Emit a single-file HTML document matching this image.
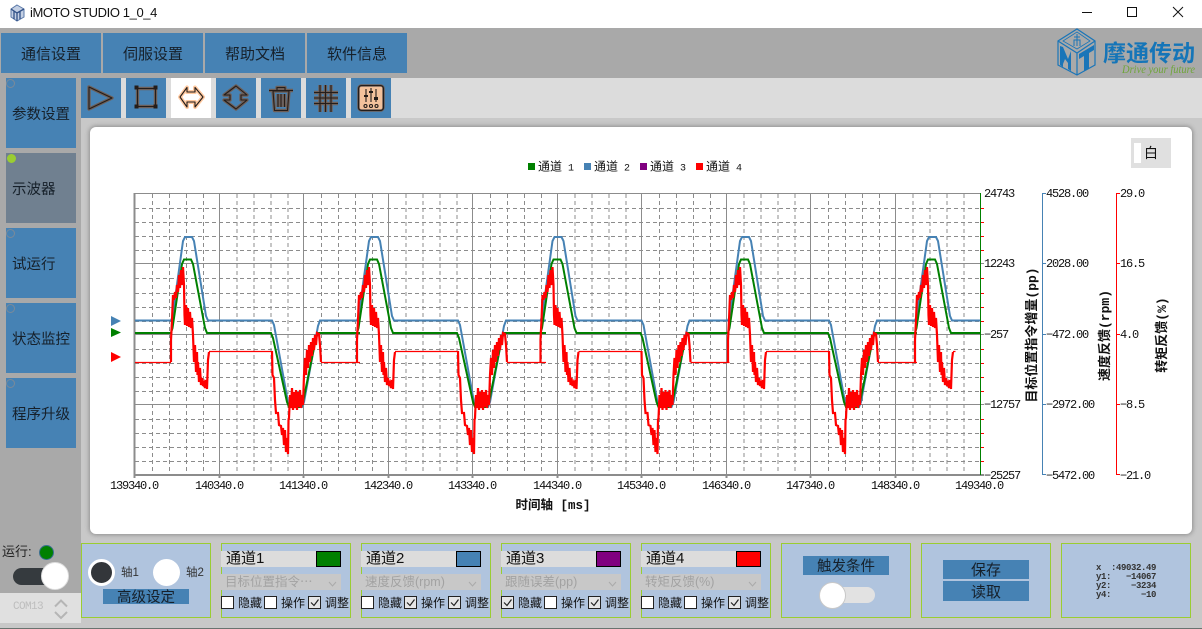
<!DOCTYPE html>
<html><head><meta charset="utf-8">
<style>
*{box-sizing:border-box;margin:0;padding:0}
html,body{width:1202px;height:629px;overflow:hidden;background:#c8c8c8;font-family:"Liberation Sans","Noto Sans CJK SC",sans-serif;color:#111}
.a{position:absolute}
.b{position:absolute;background:#4682b4;display:flex;align-items:center;justify-content:center;color:#16202a}
.m{top:33px;width:100px;height:40px;font-size:15px}
.s{left:6px;width:70px;height:70px;font-size:14.5px;justify-content:flex-start;padding-left:6px}
.d{position:absolute;left:6px;width:9px;height:9px;border-radius:50%;border:1px solid #7b8a99}
.t{top:78px;width:40px;height:40px}
.p{position:absolute;top:543px;width:130px;height:75px;background:#b0c4de;border:1px solid #9acd32}
.ct{position:absolute;left:0;top:8px;width:95px;height:16px;background:#dcdcdc;font-size:15px;line-height:16px;padding-left:5px}
.sw{position:absolute;left:95px;top:8px;width:25px;height:16px;border:1px solid #000}
.cb{position:absolute;left:0;top:30px;width:120px;height:16px;background:#c8c8c8;color:#a2a2a2;font-size:12.5px;line-height:16px;padding-left:4px;white-space:nowrap}
.cb svg{position:absolute;left:107px;top:7px}
.k{position:absolute;top:52px;width:13px;height:13px;background:#fff;border:1px solid #222}
.k.on{background:#e6e6e6}
.k.on svg{position:absolute;left:0;top:0}
.l{position:absolute;top:51px;font-size:12px;line-height:16px;white-space:nowrap;color:#111}
svg text{font-family:"Liberation Mono","Noto Sans CJK SC",monospace}
</style></head><body>

<!-- title bar -->
<div class="a" style="left:0;top:0;width:1202px;height:28px;background:#fff"></div>
<svg class="a" style="left:9px;top:4px" width="17" height="18" viewBox="0 0 17 18"><path d="M8 1 15 5V13L8 17 2 13V5Z" fill="#c4d0e4" stroke="#5a78a8" stroke-width="1"/><path d="M2 5 8 9 15 5M8 9V17M5 7V15M11 7V15" stroke="#2f4f86" stroke-width="1.3" fill="none"/></svg>
<div class="a" style="left:30px;top:4px;font-size:13px;letter-spacing:-.4px;line-height:18px;color:#111;white-space:nowrap">iMOTO STUDIO 1_0_4</div>
<svg class="a" style="left:1070px;top:0" width="132" height="28"><path d="M12 12.5H22" stroke="#111"/><rect x="57.5" y="7.5" width="9" height="9" fill="none" stroke="#111"/><path d="M103 7 113 17M113 7 103 17" stroke="#111"/></svg>

<!-- header -->
<div class="a" style="left:0;top:28px;width:1202px;height:50px;background:#a9a9a9"></div>
<div class="b m" style="left:1px">通信设置</div>
<div class="b m" style="left:103px">伺服设置</div>
<div class="b m" style="left:205px">帮助文档</div>
<div class="b m" style="left:307px">软件信息</div>

<svg class="a" style="left:1050px;top:26px" width="152" height="54" viewBox="0 0 152 54">
<g fill="none" stroke="#1a75b8" stroke-width="1.2">
<path d="M27 3 45 15V39L27 49 8 39V15Z"/><path d="M8 15 27 27 45 15M27 27V49"/>
<path d="M27 6 40 15 27 23 13 15Z" stroke-width=".8"/><path d="M24 11H30M27 8V20M24 20V14H30V20" stroke-width="1"/>
</g>
<path d="M10 20 13 21V41L10 39ZM13 21 18 33 21 25V45L18 43V37L15 33 13 38V41Z" fill="#1a75b8"/>
<path d="M29 28 44 19V24L39 27V42L34 45V30L29 33Z" fill="#1a75b8"/>
<text x="53" y="35" font-size="23" font-weight="700" fill="#1575b8" style="font-family:'Noto Sans CJK SC',sans-serif">摩通传动</text>
<text x="72" y="47" font-size="11.5" font-style="italic" fill="#6fa53a" textLength="73" lengthAdjust="spacingAndGlyphs" style="font-family:'Liberation Serif',serif">Drive your future</text>
</svg>

<!-- sidebar -->
<div class="a" style="left:0;top:78px;width:81px;height:515px;background:#a9a9a9"></div>
<div class="b s" style="top:78px">参数设置</div><div class="d" style="top:79px"></div>
<div class="b s" style="top:153px;background:#708090">示波器</div><div class="d" style="top:154px;left:7px;background:#9acd32;border-color:#9acd32"></div>
<div class="b s" style="top:228px">试运行</div><div class="d" style="top:229px"></div>
<div class="b s" style="top:303px">状态监控</div><div class="d" style="top:304px"></div>
<div class="b s" style="top:378px">程序升级</div><div class="d" style="top:379px"></div>

<div class="a" style="left:2px;top:543px;font-size:13px;line-height:18px;color:#222;white-space:nowrap">运行:</div>
<div class="a" style="left:39px;top:545px;width:15px;height:15px;border-radius:50%;background:#008000;border:1px solid #3a6f8f"></div>
<div class="a" style="left:13px;top:568px;width:42px;height:17px;border-radius:9px;background:#353a3e"></div>
<div class="a" style="left:41px;top:562px;width:28px;height:28px;border-radius:50%;background:#fff;border:1px solid #ddd"></div>
<div class="a" style="left:0;top:593px;width:81px;height:30px;background:#e0e0e0"></div>
<div class="a" style="left:13px;top:599px;font-size:11px;line-height:16px;color:#bdbdbd;font-family:'Liberation Mono',monospace;letter-spacing:-.6px">COM13</div>
<svg class="a" style="left:52px;top:596px" width="18" height="26"><path d="M3 10.500 9 4.500 15 10.500M3 16 9 22 15 16" fill="none" stroke="#b5b5b5" stroke-width="2"/></svg>

<!-- toolbar -->
<div class="a" style="left:81px;top:78px;width:1121px;height:40px;background:#dcdcdc"></div>
<div class="b t" style="left:81px"></div>
<div class="b t" style="left:126px"></div>
<div class="a t" style="left:171px;background:#fff"></div>
<div class="b t" style="left:216px"></div>
<div class="b t" style="left:261px"></div>
<div class="b t" style="left:306px"></div>
<div class="b t" style="left:351px"></div>
<svg class="a" style="left:0;top:0" width="400" height="120" fill="none" stroke-linejoin="round">
<g stroke="#6e5f58" stroke-width="3.4">
<path d="M89 87 112 98 89 109Z"/>
<path d="M137.500 88.500H155.500V106.500H137.500Z"/>
<path d="M236 86 247 95H241V100H247L236 109 224 100H230V95H224Z"/>
<path d="M269 90.500H293M277 90V87.500H285V90M273 91 274.500 110.500H287.500L289 91ZM278 94V107M281 94V107M284.500 94V107"/>
<path d="M320 85V112M325.500 85V112M331 85V112M314 92.500H338M314 98H338M314 103.500H338"/>
</g>
<path d="M180 97 187 87.500V92H195V87.500L203 97 195 107V102H187V107Z" stroke="#ffc9a0" stroke-width="4"/>
<rect x="358.500" y="85.500" width="25" height="25" rx="3" fill="#f3c29c" stroke="#6e5f58" stroke-width="2.500"/>
<g stroke="#241d1a" stroke-width="1.100">
<path d="M89 87 112 98 89 109Z"/>
<path d="M137.500 88.500H155.500V106.500H137.500Z"/>
<path d="M180 97 187 87.500V92H195V87.500L203 97 195 107V102H187V107Z"/>
<path d="M236 86 247 95H241V100H247L236 109 224 100H230V95H224Z"/>
<path d="M269 90.500H293M277 90V87.500H285V90M273 91 274.500 110.500H287.500L289 91ZM278 94V107M281 94V107M284.500 94V107"/>
<path d="M320 85V112M325.500 85V112M331 85V112M314 92.500H338M314 98H338M314 103.500H338"/>
<path d="M366 89V102M371 88V102M376 89V102"/>
<rect x="358.500" y="85.500" width="25" height="25" rx="3"/>
<circle cx="365.500" cy="106" r="1.500"/><circle cx="371" cy="106" r="1.500"/><circle cx="376.500" cy="106" r="1.500"/>
</g>
<g fill="#241d1a"><rect x="134.500" y="85.500" width="4" height="4"/><rect x="153.500" y="85.500" width="4" height="4"/><rect x="134.500" y="104.500" width="4" height="4"/><rect x="153.500" y="104.500" width="4" height="4"/><rect x="364" y="95" width="4" height="2"/><rect x="369" y="91" width="4" height="2"/><rect x="374" y="97" width="4" height="3"/></g>
</svg>

<!-- main white panel -->
<div class="a" style="left:90px;top:127px;width:1102px;height:407px;background:#fff;border-radius:6px;box-shadow:0 0 4px 1px #8f8f8f"></div>
<div class="a" style="left:1131px;top:138px;width:40px;height:30px;background:#e0e0e0"></div>
<div class="a" style="left:1134px;top:143px;width:7px;height:20px;background:#fff"></div>
<div class="a" style="left:1144px;top:144px;font-size:14px;line-height:18px">白</div>

<!-- chart -->
<svg class="a" style="left:0;top:0" width="1202" height="629" viewBox="0 0 1202 629">
<defs>
<clipPath id="cp"><rect x="130" y="190" width="850" height="290"/></clipPath>
<clipPath id="cr"><rect x="130" y="190" width="825.500" height="290"/></clipPath>
<g id="mv"><path d="M152.500 194V474M169.500 194V474M186.500 194V474M203.500 194V474"/></g>
<path id="pb" d="M171 320.500 172.500 317 183 241 185 237H192L194 241 206 316 208 320.500H272L274 325 288 402 290 407H302L304 402 318 326 320 320.500H360"/>
<path id="pg" d="M171 333 172.500 328 182 264 184 259.500H191L193 264 205 328 207 333H271L273 338 287 402 289 407H301L303 402 316 338 318 333H360"/>
<path id="pr" d="M171 362V340L172 320 173 295 174 300 175 292 176 298 177 285 178 292 179 275 180 288 181 270 182 285 183 267 184 285 184.500 315 185 325 186 305 187 326 188 308 189 327 190 312 191 328 192 318 193 335 194 362 195 345 196 372 197 352 197.500 375 198 362 199 382 200 368 201 385 202 378 203 386 204 383 205 388 206 380 207 389 208 360 209 352M272 351 272.500 375 274 378 275 400 276 413 278 413 279 425 281 426 282 435 283 428 284 445 285 430 286 452 287 438 288 454 288.500 420 289 418 290 395 291 408 292 388 293 410 294 392 295 408 296 390 297 410 298 392 299 407 300 390 301 408 302 395 303 405 304 375 305 358 306 375 307 350 308 368 309 345 310 362 311 342 312 356 313 338 314 350 315 335 316 345 317 333 319 334 320 345 321 362"/>
<path id="pf" d="M209 351.500H272.500M321 362.500H360"/>
</defs>

<g fill="none" stroke="#8c8c8c" stroke-width="1">
<g stroke-dasharray="4 3">
<path d="M135 208.500H980M135 222.500H980M135 236.500H980M135 250.500H980M135 278.500H980M135 293.500H980M135 307.500H980M135 321.500H980M135 349.500H980M135 363.500H980M135 377.500H980M135 391.500H980M135 419.500H980M135 433.500H980M135 447.500H980M135 461.500H980"/>
<use href="#mv"/><use href="#mv" x="84.500"/><use href="#mv" x="169"/><use href="#mv" x="253.500"/><use href="#mv" x="338"/><use href="#mv" x="422.500"/><use href="#mv" x="507"/><use href="#mv" x="591.500"/><use href="#mv" x="676"/><use href="#mv" x="760.500"/>
</g>
<path d="M135 193.500H980M135 263.500H984M135 334.500H984M135 404.500H984"/>
<path d="M219.500 193V474M303.500 193V474M388.500 193V474M472.500 193V474M557.500 193V474M641.500 193V474M726.500 193V474M810.500 193V474M895.500 193V474"/>
<path d="M134.500 193V478M219.500 474V478M303.500 474V478M388.500 474V478M472.500 474V478M557.500 474V478M641.500 474V478M726.500 474V478M810.500 474V478M895.500 474V478" stroke-width="2"/>
<path d="M134 475H984" stroke-width="2"/>
</g>

<g clip-path="url(#cp)" fill="none" stroke-width="2">
<g stroke="#4682b4"><path d="M135 320.500H171"/><use href="#pb"/><use href="#pb" x="186"/><use href="#pb" x="369.500"/><use href="#pb" x="557"/><use href="#pb" x="744"/></g>
<g stroke="#008000"><path d="M135 333H171"/><use href="#pg"/><use href="#pg" x="186"/><use href="#pg" x="369.500"/><use href="#pg" x="557"/><use href="#pg" x="744"/></g>
</g>
<g clip-path="url(#cr)" fill="none" stroke="#ff0000" stroke-width="2.200">
<g stroke-width="1.200"><path d="M135 362.500H171"/><use href="#pf"/><use href="#pf" x="186"/><use href="#pf" x="369.500"/><use href="#pf" x="557"/><use href="#pf" x="744"/></g>
<use href="#pr"/><use href="#pr" x="186"/><use href="#pr" x="369.500"/><use href="#pr" x="557"/><use href="#pr" x="744"/></g>

<!-- axes -->
<path d="M980.500 193V475" stroke="#008000" fill="none"/>
<path d="M981 208.500H984M981 222.500H984M981 236.500H984M981 250.500H984M981 278.500H984M981 293.500H984M981 307.500H984M981 321.500H984M981 349.500H984M981 363.500H984M981 377.500H984M981 391.500H984M981 419.500H984M981 433.500H984M981 447.500H984M981 461.500H984" stroke="#ff0000" fill="none"/>
<path d="M1046 193.500H1042.500V474.500H1046M1042.500 263.500H1046M1042.500 334.500H1046M1042.500 404.500H1046" stroke="#4682b4" fill="none"/>
<path d="M1120 193.500H1116.500V474.500H1120M1116.500 263.500H1120M1116.500 334.500H1120M1116.500 404.500H1120" stroke="#ff0000" fill="none"/>

<g font-size="12" fill="#111" letter-spacing="-1.200">
<text x="984" y="197">24743</text><text x="984" y="267">12243</text><text x="984" y="338">−257</text><text x="984" y="408">−12757</text><text x="984" y="479">−25257</text>
<text x="1046" y="197">4528.00</text><text x="1046" y="267">2028.00</text><text x="1046" y="338">−472.00</text><text x="1046" y="408">−2972.00</text><text x="1046" y="479">−5472.00</text>
<text x="1120" y="197">29.0</text><text x="1120" y="267">16.5</text><text x="1120" y="338">4.0</text><text x="1120" y="408">−8.5</text><text x="1120" y="479">−21.0</text>
</g>
<g font-size="12" fill="#111" letter-spacing="-1.200" text-anchor="middle">
<text x="134" y="489">139340.0</text><text x="219" y="489">140340.0</text><text x="303" y="489">141340.0</text><text x="388" y="489">142340.0</text><text x="472" y="489">143340.0</text><text x="557" y="489">144340.0</text><text x="641" y="489">145340.0</text><text x="726" y="489">146340.0</text><text x="810" y="489">147340.0</text><text x="895" y="489">148340.0</text><text x="979" y="489">149340.0</text>
</g>
<text x="553" y="509" font-size="12.500" font-weight="700" text-anchor="middle" fill="#111">时间轴 [ms]</text>
<g font-size="13" font-weight="700" text-anchor="middle" fill="#111">
<text transform="translate(1036 335) rotate(-90)">目标位置指令增量(pp)</text>
<text transform="translate(1109 335.500) rotate(-90)">速度反馈(rpm)</text>
<text transform="translate(1166 335) rotate(-90)">转矩反馈(%)</text>
</g>

<!-- legend -->
<g font-size="12" fill="#111">
<rect x="528" y="163" width="7" height="7" fill="#008000"/><text x="538" y="170.500">通道<tspan font-size="10"> 1</tspan></text>
<rect x="584" y="163" width="7" height="7" fill="#4682b4"/><text x="594" y="170.500">通道<tspan font-size="10"> 2</tspan></text>
<rect x="640" y="163" width="7" height="7" fill="#800080"/><text x="650" y="170.500">通道<tspan font-size="10"> 3</tspan></text>
<rect x="696" y="163" width="7" height="7" fill="#ff0000"/><text x="706" y="170.500">通道<tspan font-size="10"> 4</tspan></text>
</g>

<!-- side markers -->
<path d="M111 316 121 321 111 326Z" fill="#4682b4"/>
<path d="M111 328 121 332.500 111 337Z" fill="#008000"/>
<path d="M111 352 121 357 111 362Z" fill="#ff0000"/>
</svg>

<!-- bottom panels -->
<div class="p" style="left:81px">
  <div class="a" style="left:6px;top:15px;width:27px;height:27px;border-radius:50%;background:#33363a;border:3px solid #fff"></div>
  <div class="a" style="left:39px;top:21px;font-size:11.500px;line-height:16px;color:#333;white-space:nowrap">轴1</div>
  <div class="a" style="left:71px;top:15px;width:27px;height:27px;border-radius:50%;background:#fff"></div>
  <div class="a" style="left:104px;top:21px;font-size:11.500px;line-height:16px;color:#333;white-space:nowrap">轴2</div>
  <div class="b" style="left:21px;top:45px;width:86px;height:15px;font-size:14.500px">高级设定</div>
</div>

<div class="p" style="left:221px">
  <div class="ct" style="left:-1px;top:7px">通道1</div><div class="sw" style="left:94px;top:7px;background:#008000"></div>
  <div class="cb" style="left:-1px;top:30px">目标位置指令⋯<svg width="9" height="6"><path d="M1 1 4.500 5 8 1" fill="none" stroke="#aaa"/></svg></div>
  <div class="k" style="left:-1px"></div><div class="l" style="left:16px">隐藏</div>
  <div class="k" style="left:42px"></div><div class="l" style="left:59px">操作</div>
  <div class="k on" style="left:86px"><svg width="11" height="11"><path d="M2 5.500 5 8.500 9.500 2.500" fill="none" stroke="#222" stroke-width="1.200"/></svg></div><div class="l" style="left:103px">调整</div>
</div>
<div class="p" style="left:361px">
  <div class="ct" style="left:-1px;top:7px">通道2</div><div class="sw" style="left:94px;top:7px;background:#4682b4"></div>
  <div class="cb" style="left:-1px;top:30px">速度反馈(rpm)<svg width="9" height="6"><path d="M1 1 4.500 5 8 1" fill="none" stroke="#aaa"/></svg></div>
  <div class="k" style="left:-1px"></div><div class="l" style="left:16px">隐藏</div>
  <div class="k on" style="left:42px"><svg width="11" height="11"><path d="M2 5.500 5 8.500 9.500 2.500" fill="none" stroke="#222" stroke-width="1.200"/></svg></div><div class="l" style="left:59px">操作</div>
  <div class="k on" style="left:86px"><svg width="11" height="11"><path d="M2 5.500 5 8.500 9.500 2.500" fill="none" stroke="#222" stroke-width="1.200"/></svg></div><div class="l" style="left:103px">调整</div>
</div>
<div class="p" style="left:501px">
  <div class="ct" style="left:-1px;top:7px">通道3</div><div class="sw" style="left:94px;top:7px;background:#800080"></div>
  <div class="cb" style="left:-1px;top:30px">跟随误差(pp)<svg width="9" height="6"><path d="M1 1 4.500 5 8 1" fill="none" stroke="#aaa"/></svg></div>
  <div class="k on" style="left:-1px"><svg width="11" height="11"><path d="M2 5.500 5 8.500 9.500 2.500" fill="none" stroke="#222" stroke-width="1.200"/></svg></div><div class="l" style="left:16px">隐藏</div>
  <div class="k" style="left:42px"></div><div class="l" style="left:59px">操作</div>
  <div class="k on" style="left:86px"><svg width="11" height="11"><path d="M2 5.500 5 8.500 9.500 2.500" fill="none" stroke="#222" stroke-width="1.200"/></svg></div><div class="l" style="left:103px">调整</div>
</div>
<div class="p" style="left:641px">
  <div class="ct" style="left:-1px;top:7px">通道4</div><div class="sw" style="left:94px;top:7px;background:#ff0000"></div>
  <div class="cb" style="left:-1px;top:30px">转矩反馈(%)<svg width="9" height="6"><path d="M1 1 4.500 5 8 1" fill="none" stroke="#aaa"/></svg></div>
  <div class="k" style="left:-1px"></div><div class="l" style="left:16px">隐藏</div>
  <div class="k" style="left:42px"></div><div class="l" style="left:59px">操作</div>
  <div class="k on" style="left:86px"><svg width="11" height="11"><path d="M2 5.500 5 8.500 9.500 2.500" fill="none" stroke="#222" stroke-width="1.200"/></svg></div><div class="l" style="left:103px">调整</div>
</div>

<div class="p" style="left:781px">
  <div class="b" style="left:21px;top:12px;width:86px;height:19px;font-size:14.500px">触发条件</div>
  <div class="a" style="left:43px;top:43px;width:50px;height:16px;border-radius:8px;background:#e2e2e2"></div>
  <div class="a" style="left:37px;top:38px;width:27px;height:27px;border-radius:50%;background:#fff;border:1px solid #c8c8c8"></div>
</div>
<div class="p" style="left:921px">
  <div class="b" style="left:21px;top:16px;width:86px;height:19px;font-size:15px">保存</div>
  <div class="b" style="left:21px;top:37px;width:86px;height:20px;font-size:15px">读取</div>
</div>
<div class="p" style="left:1061px">
  <div class="a" style="left:34px;top:20px;width:61px;font:700 9px/9px 'Liberation Mono',monospace;letter-spacing:-.4px;color:#333;white-space:pre">x  :49032.49
y1:   −14067
y2:    −3234
y4:      −10</div>
</div>

<div class="a" style="left:0;top:628px;width:1202px;height:1px;background:#69736f"></div>
</body></html>
